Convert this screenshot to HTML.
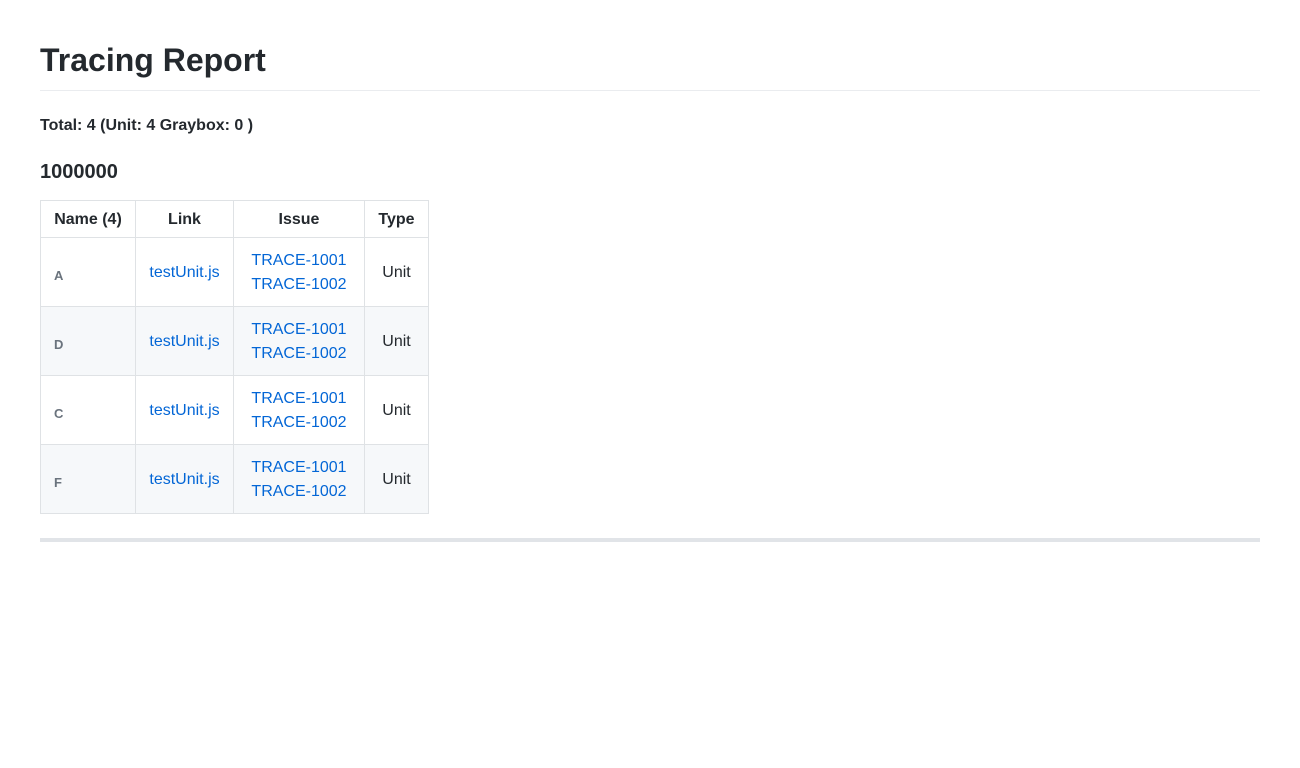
<!DOCTYPE html>
<html><head><style>
body{margin:0;font-family:"Liberation Sans",sans-serif;color:#24292e;background:#fff;font-size:16px;line-height:1.5}
.w{padding:0 40px}
h1{font-size:32px;font-weight:600;margin:0;padding-top:38px;height:52px;line-height:44px;border-bottom:1px solid #eaecef}
.t{font-weight:bold;margin:0;position:absolute;top:114px;left:40px}
h3{font-size:20px;margin:0;position:absolute;top:157px;left:40px;line-height:30px}
table{position:absolute;top:200px;left:40px;border-collapse:collapse}
th,td{border:1px solid #dfe2e5;padding:0 13px;text-align:center}
th{height:36px;font-weight:bold;padding-top:1px;height:35px}
td{height:67px;padding-top:1px}
tr:nth-child(2n+1) td{background:#f6f8fa}
td.n{text-align:left;font-size:13px;font-weight:bold;color:#6a737d;padding-top:8px;height:60px}
a{color:#0366d6;text-decoration:none}
hr{position:absolute;top:538px;left:40px;width:1220px;margin:0;border:0;height:4px;background:#e1e4e8}
</style></head><body><div class="w">
<h1>Tracing Report</h1>
<p class="t">Total: 4 (Unit: 4 Graybox: 0 )</p>
<h3>1000000</h3>
<table>
<tr><th style="width:68px">Name (4)</th><th style="width:71px">Link</th><th style="width:104px">Issue</th><th style="width:37px">Type</th></tr>
<tr><td class="n">A</td><td><a>testUnit.js</a></td><td><a>TRACE-1001</a><br><a>TRACE-1002</a></td><td>Unit</td></tr>
<tr><td class="n">D</td><td><a>testUnit.js</a></td><td><a>TRACE-1001</a><br><a>TRACE-1002</a></td><td>Unit</td></tr>
<tr><td class="n">C</td><td><a>testUnit.js</a></td><td><a>TRACE-1001</a><br><a>TRACE-1002</a></td><td>Unit</td></tr>
<tr><td class="n">F</td><td><a>testUnit.js</a></td><td><a>TRACE-1001</a><br><a>TRACE-1002</a></td><td>Unit</td></tr>
</table>
<hr>
</div></body></html>
